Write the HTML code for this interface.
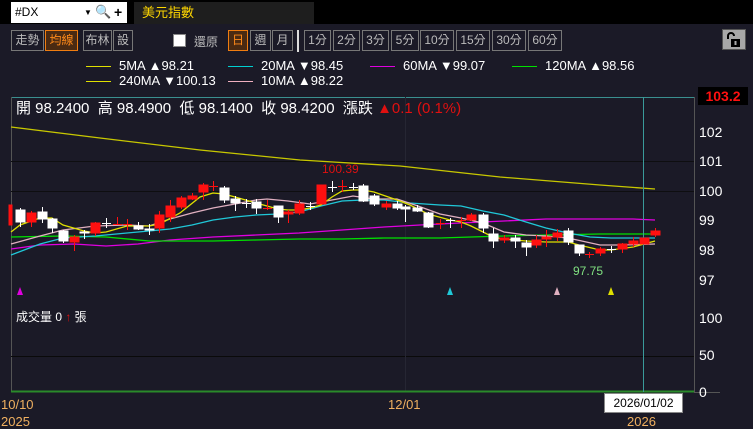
<!DOCTYPE html>
<html><head><meta charset="utf-8"><style>
body{margin:0;width:753px;height:427px;background:#1b1a27;overflow:hidden;position:relative;font-family:"Liberation Sans","Noto Sans CJK TC",sans-serif;color:#ddd}
.a{position:absolute}
.btn{position:absolute;top:30px;height:21px;border:1px solid #777;box-sizing:border-box;color:#bbb;font-size:12px;line-height:19px;text-align:center;background:#1b1a27}
.on{border-color:#f07d10;color:#ff8a1a;background:#4a2a12}
.lg{position:absolute;font-size:13px;color:#fff;white-space:nowrap}
.ln{display:inline-block;width:25px;height:1px;vertical-align:middle;margin-right:8px}
</style></head><body>
<div class="a" style="left:0;top:0;width:753px;height:24px;background:#000"></div>
<div class="a" style="left:11px;top:2px;width:116px;height:21px;background:#fff;color:#000;font-size:12px;line-height:21px;padding-left:4px;box-sizing:border-box">#DX<span style="position:absolute;left:73px;font-size:8px">▼</span><span style="position:absolute;left:84px;top:-1px;font-size:13px;color:#68a">🔍</span><span style="position:absolute;left:103px;font-weight:bold;font-size:14px">+</span></div>
<div class="a" style="left:134px;top:2px;width:172px;height:22px;background:#1e1e1e;color:#ffd700;font-size:13px;line-height:22px;padding-left:8px">美元指數</div>

<div class="btn" style="left:11px;width:33px">走勢</div>
<div class="btn on" style="left:45px;width:33px">均線</div>
<div class="btn" style="left:83px;width:29px">布林</div>
<div class="btn" style="left:113px;width:20px">設</div>
<div class="a" style="left:173px;top:34px;width:13px;height:13px;background:#fff;border:1px solid #888;box-sizing:border-box"></div>
<div class="a" style="left:194px;top:33px;font-size:12px;color:#bbb">還原</div>
<div class="btn on" style="left:228px;width:20px">日</div>
<div class="btn" style="left:250px;width:21px">週</div>
<div class="btn" style="left:272px;width:21px">月</div>
<div class="a" style="left:297px;top:30px;width:2px;height:22px;background:#ddd"></div>
<div class="btn" style="left:304px;width:27px">1分</div>
<div class="btn" style="left:333px;width:27px">2分</div>
<div class="btn" style="left:362px;width:27px">3分</div>
<div class="btn" style="left:391px;width:28px">5分</div>
<div class="btn" style="left:420px;width:34px">10分</div>
<div class="btn" style="left:456px;width:34px">15分</div>
<div class="btn" style="left:492px;width:34px">30分</div>
<div class="btn" style="left:528px;width:34px">60分</div>
<div class="a" style="left:722px;top:29px;width:24px;height:21px;background:#a8a8a8;border:1px solid #555;box-sizing:border-box">
<svg width="22" height="19" viewBox="0 0 22 19"><path d="M5 9V6a3 3 0 0 1 6 0" stroke="#000" stroke-width="2" fill="none"/><rect x="8" y="9" width="9" height="8" fill="#000"/><rect x="11.5" y="11" width="2" height="4" fill="#aaa"/></svg></div>

<div class="lg" style="left:86px;top:58px"><span class="ln" style="background:#e0e000"></span>5MA ▲98.21</div>
<div class="lg" style="left:228px;top:58px"><span class="ln" style="background:#00d0d0"></span>20MA ▼98.45</div>
<div class="lg" style="left:370px;top:58px"><span class="ln" style="background:#e000e0"></span>60MA ▼99.07</div>
<div class="lg" style="left:512px;top:58px"><span class="ln" style="background:#00e000"></span>120MA ▲98.56</div>
<div class="lg" style="left:86px;top:73px"><span class="ln" style="background:#e0e000"></span>240MA ▼100.13</div>
<div class="lg" style="left:228px;top:73px"><span class="ln" style="background:#f0b0c0"></span>10MA ▲98.22</div>

<svg class="a" style="left:0;top:0" width="753" height="427">
<line x1="11" y1="97.5" x2="694" y2="97.5" stroke="#3a8f8f"/>
<line x1="11.5" y1="97" x2="11.5" y2="392" stroke="#555"/>
<line x1="694.5" y1="97" x2="694.5" y2="392" stroke="#555"/>
<line x1="11" y1="161.5" x2="694" y2="161.5" stroke="#0e0e10"/>
<line x1="11" y1="191.5" x2="694" y2="191.5" stroke="#0e0e10"/>
<line x1="11" y1="356.5" x2="694" y2="356.5" stroke="#0a0a0a"/>
<line x1="405.5" y1="97" x2="405.5" y2="392" stroke="#262633"/>
<line x1="11" y1="391.5" x2="694" y2="391.5" stroke="#2a8a2a" stroke-width="2"/>
<line x1="694" y1="392.5" x2="720" y2="392.5" stroke="#555"/>
<g fill="none" stroke-width="1.3">
<polyline stroke="#c8c800" points="11,127 100,138 200,150 300,160 400,166 500,177 600,185 655,189"/>
<polyline stroke="#e000e0" points="11,249 40,245 74,244 106,246 138,244 170,240 213,237 256,235 299,233 342,230 384,227 420,225 460,223 504,221 546,219 590,219 633,219 655,220"/>
<polyline stroke="#00e000" points="11,237 63,236 106,237 149,241 213,241 256,240 299,239 342,239 384,238 440,238 471,237 504,236 546,235 600,234 655,234"/>
<polyline stroke="#20c8d8" points="11,255 40,244 63,238 95,236 127,233 149,231 170,229 192,225 213,220 235,217 256,215 278,214 299,212 321,206 342,201 363,200 384,200 410,203 440,205 461,206 483,211 504,215 526,222 546,228 568,233 590,237 611,238 633,238 655,238"/>
<polyline stroke="#e0b0c0" points="11,244 40,236 63,230 95,226 127,225 149,226 170,219 192,213 213,208 235,204 256,200 267,199 288,201 310,204 332,200 353,196 374,199 397,199 418,206 440,214 461,218 483,223 504,232 526,235 546,236 568,238 600,245 622,245 655,244"/>
<polyline stroke="#e0e000" points="11,232 20,225 40,218 52,218 63,225 84,231 95,233 106,232 127,226 149,226 160,224 180,213 200,197 213,193 224,194 235,197 256,203 278,209 288,210 299,210 310,208 321,205 332,197 342,191 353,190 363,190 374,192 397,200 410,205 428,214 450,220 461,222 471,226 493,237 504,239 526,241 546,242 568,242 579,245 600,250 611,250 633,247 655,241"/>
</g>
<line x1="643.5" y1="97" x2="643.5" y2="392" stroke="#3a9a9a"/>
<g stroke-width="1">
<g stroke="#ff1010" fill="#ff1010">
<rect x="9" y="205" width="3" height="20"/>
<line x1="31.5" y1="211" x2="31.5" y2="227"/><rect x="27" y="213" width="9" height="9"/>
<line x1="74.5" y1="235" x2="74.5" y2="251"/><rect x="70" y="237" width="9" height="5"/>
<line x1="95.5" y1="222" x2="95.5" y2="236"/><rect x="91" y="223" width="9" height="10"/>
<line x1="117.5" y1="217" x2="117.5" y2="225"/><line x1="113" y1="224.5" x2="122" y2="224.5"/>
<line x1="127.5" y1="219" x2="127.5" y2="230"/><line x1="123" y1="224.5" x2="132" y2="224.5"/>
<line x1="159.5" y1="211" x2="159.5" y2="233"/><rect x="155" y="215" width="9" height="13"/>
<line x1="170.5" y1="200" x2="170.5" y2="222"/><rect x="166" y="206" width="9" height="11"/>
<line x1="181.5" y1="196" x2="181.5" y2="209"/><rect x="177" y="198" width="9" height="9"/>
<line x1="192.5" y1="193" x2="192.5" y2="200"/><rect x="188" y="196" width="9" height="3"/>
<line x1="203.5" y1="183" x2="203.5" y2="200"/><rect x="199" y="185" width="9" height="7"/>
<line x1="213.5" y1="181" x2="213.5" y2="191"/><line x1="209" y1="186.5" x2="218" y2="186.5"/>
<line x1="267.5" y1="200" x2="267.5" y2="210"/><line x1="263" y1="208.5" x2="272" y2="208.5"/>
<line x1="288.5" y1="210" x2="288.5" y2="223"/><rect x="284" y="212" width="9" height="2"/>
<line x1="299.5" y1="200" x2="299.5" y2="215"/><rect x="295" y="204" width="9" height="9"/>
<rect x="317" y="185" width="9" height="19"/>
<line x1="342.5" y1="180" x2="342.5" y2="192"/><line x1="338" y1="186.5" x2="347" y2="186.5"/>
<line x1="386.5" y1="201" x2="386.5" y2="210"/><rect x="382" y="204" width="9" height="3"/>
<line x1="440.5" y1="219" x2="440.5" y2="229"/><line x1="436" y1="223.5" x2="445" y2="223.5"/>
<line x1="461.5" y1="217" x2="461.5" y2="228"/><line x1="457" y1="220.5" x2="466" y2="220.5"/>
<line x1="471.5" y1="213" x2="471.5" y2="221"/><rect x="467" y="215" width="9" height="5"/>
<line x1="504.5" y1="235" x2="504.5" y2="243"/><rect x="500" y="238" width="9" height="2"/>
<line x1="536.5" y1="235" x2="536.5" y2="248"/><rect x="532" y="240" width="9" height="5"/>
<line x1="546.5" y1="230" x2="546.5" y2="247"/><rect x="542" y="237" width="9" height="2"/>
<line x1="557.5" y1="229" x2="557.5" y2="241"/><rect x="553" y="233" width="9" height="4"/>
<line x1="589.5" y1="252" x2="589.5" y2="258"/><line x1="585" y1="254.5" x2="594" y2="254.5"/>
<line x1="600.5" y1="247" x2="600.5" y2="256"/><rect x="596" y="249" width="9" height="4"/>
<line x1="622.5" y1="243" x2="622.5" y2="253"/><rect x="618" y="244" width="9" height="5"/>
<line x1="633.5" y1="237" x2="633.5" y2="247"/><rect x="629" y="241" width="9" height="3"/>
<rect x="640" y="238" width="9" height="6"/>
<line x1="655.5" y1="228" x2="655.5" y2="237"/><rect x="651" y="231" width="9" height="4"/>
</g>
<g stroke="#fff" fill="#fff">
<line x1="20.5" y1="208" x2="20.5" y2="227"/><rect x="16" y="210" width="9" height="12"/>
<line x1="42.5" y1="207" x2="42.5" y2="223"/><rect x="38" y="212" width="9" height="7"/>
<line x1="52.5" y1="218" x2="52.5" y2="233"/><rect x="48" y="219" width="9" height="9"/>
<line x1="63.5" y1="230" x2="63.5" y2="243"/><rect x="59" y="231" width="9" height="10"/>
<line x1="84.5" y1="230" x2="84.5" y2="239"/><rect x="80" y="232" width="9" height="1"/>
<line x1="106.5" y1="218" x2="106.5" y2="228"/><line x1="102" y1="223.5" x2="111" y2="223.5"/>
<line x1="138.5" y1="222" x2="138.5" y2="230"/><rect x="134" y="226" width="9" height="3"/>
<line x1="149.5" y1="224" x2="149.5" y2="235"/><rect x="145" y="229" width="9" height="1"/>
<line x1="224.5" y1="186" x2="224.5" y2="203"/><rect x="220" y="188" width="9" height="12"/>
<line x1="235.5" y1="196" x2="235.5" y2="211"/><rect x="231" y="199" width="9" height="4"/>
<line x1="246.5" y1="199" x2="246.5" y2="208"/><line x1="242" y1="203.5" x2="251" y2="203.5"/>
<line x1="256.5" y1="199" x2="256.5" y2="214"/><rect x="252" y="202" width="9" height="6"/>
<line x1="278.5" y1="206" x2="278.5" y2="223"/><rect x="274" y="206" width="9" height="11"/>
<line x1="310.5" y1="202" x2="310.5" y2="210"/><line x1="306" y1="206.5" x2="315" y2="206.5"/>
<line x1="332.5" y1="181" x2="332.5" y2="192"/><line x1="328" y1="187.5" x2="337" y2="187.5"/>
<line x1="353.5" y1="183" x2="353.5" y2="190"/><line x1="349" y1="187.5" x2="358" y2="187.5"/>
<line x1="363.5" y1="184" x2="363.5" y2="202"/><rect x="359" y="186" width="9" height="15"/>
<line x1="374.5" y1="194" x2="374.5" y2="206"/><rect x="370" y="196" width="9" height="8"/>
<line x1="397.5" y1="201" x2="397.5" y2="210"/><rect x="393" y="204" width="9" height="4"/>
<line x1="405.5" y1="205" x2="405.5" y2="222"/><rect x="401" y="207" width="9" height="2"/>
<line x1="417.5" y1="205" x2="417.5" y2="212"/><rect x="413" y="208" width="9" height="3"/>
<line x1="428.5" y1="212" x2="428.5" y2="228"/><rect x="424" y="213" width="9" height="14"/>
<line x1="450.5" y1="218" x2="450.5" y2="228"/><line x1="446" y1="220.5" x2="455" y2="220.5"/>
<line x1="483.5" y1="213" x2="483.5" y2="233"/><rect x="479" y="215" width="9" height="13"/>
<line x1="493.5" y1="228" x2="493.5" y2="248"/><rect x="489" y="234" width="9" height="7"/>
<line x1="515.5" y1="235" x2="515.5" y2="248"/><rect x="511" y="238" width="9" height="3"/>
<line x1="526.5" y1="240" x2="526.5" y2="256"/><rect x="522" y="243" width="9" height="4"/>
<line x1="568.5" y1="228" x2="568.5" y2="245"/><rect x="564" y="231" width="9" height="11"/>
<line x1="579.5" y1="245" x2="579.5" y2="256"/><rect x="575" y="245" width="9" height="8"/>
<line x1="611.5" y1="246" x2="611.5" y2="253"/><line x1="607" y1="249.5" x2="616" y2="249.5"/>
</g></g>
<polygon points="17,295 23,295 20,287" fill="#e000e0"/>
<polygon points="447,295 453,295 450,287" fill="#20c8d8"/>
<polygon points="554,295 560,295 557,287" fill="#e0b0c0"/>
<polygon points="608,295 614,295 611,287" fill="#e0e000"/>
</svg>

<div class="a" style="left:16px;top:97px;font-size:15px;color:#fff;white-space:nowrap">開 98.2400 &nbsp;高 98.4900 &nbsp;低 98.1400 &nbsp;收 98.4200 &nbsp;漲跌 <span style="color:#e01010">▲0.1 (0.1%)</span></div>
<div class="a" style="left:322px;top:162px;font-size:12px;color:#e01010">100.39</div>
<div class="a" style="left:573px;top:264px;font-size:12px;color:#80e080">97.75</div>
<div class="a" style="left:698px;top:87px;width:50px;height:18px;background:#000;color:#ff1010;font-weight:bold;font-size:14px;line-height:18px;text-align:center">103.2</div>
<div class="a" style="left:699px;top:124px;font-size:14px;color:#fff;line-height:16px">102</div>
<div class="a" style="left:699px;top:153px;font-size:14px;color:#fff;line-height:16px">101</div>
<div class="a" style="left:699px;top:183px;font-size:14px;color:#fff;line-height:16px">100</div>
<div class="a" style="left:699px;top:212px;font-size:14px;color:#fff;line-height:16px">99</div>
<div class="a" style="left:699px;top:242px;font-size:14px;color:#fff;line-height:16px">98</div>
<div class="a" style="left:699px;top:272px;font-size:14px;color:#fff;line-height:16px">97</div>
<div class="a" style="left:699px;top:310px;font-size:14px;color:#fff;line-height:16px">100</div>
<div class="a" style="left:699px;top:347px;font-size:14px;color:#fff;line-height:16px">50</div>
<div class="a" style="left:699px;top:384px;font-size:14px;color:#fff;line-height:16px">0</div>
<div class="a" style="left:16px;top:308px;font-size:12px;color:#fff">成交量 0 <span style="color:#e01010">↑</span> 張</div>
<div class="a" style="left:604px;top:393px;width:79px;height:20px;background:#fff;border:1px solid #888;box-sizing:border-box;color:#000;font-size:12px;line-height:18px;text-align:center">2026/01/02</div>
<div class="a" style="left:1px;top:397px;font-size:13px;color:#f0b060">10/10</div>
<div class="a" style="left:1px;top:414px;font-size:13px;color:#f0b060">2025</div>
<div class="a" style="left:388px;top:397px;font-size:13px;color:#f0b060">12/01</div>
<div class="a" style="left:627px;top:414px;font-size:13px;color:#f0b060">2026</div>
</body></html>
